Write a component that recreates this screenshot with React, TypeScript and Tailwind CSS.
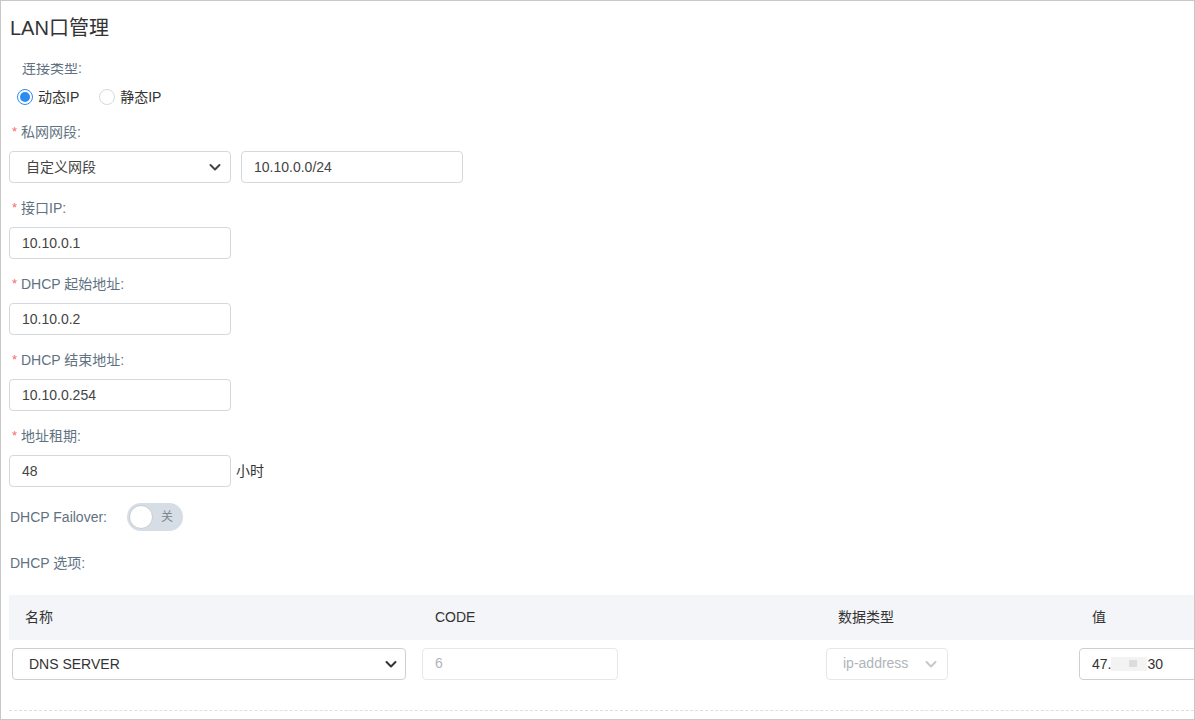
import { ReactNode } from 'react'

const font = { fontFamily: '"Liberation Sans", "Noto Sans CJK SC", sans-serif' }

function Chevron({ className }: { className?: string }) {
  return (
    <svg viewBox="0 0 16 16" className={className} fill="none" stroke="currentColor" strokeWidth="2" strokeLinecap="round" strokeLinejoin="round">
      <path d="M3.5 6l4.5 4.5L12.5 6" />
    </svg>
  )
}

function Label({ children, required = true }: { children: ReactNode; required?: boolean }) {
  return (
    <div className="flex items-center h-[20px] text-[14px] text-[#5f7282] leading-[20px]">
      {required ? <span className="w-[12px] pl-[3px] text-[#f56c6c] text-[13px]">*</span> : <span className="w-[12px]" />}
      <span>{children}</span>
    </div>
  )
}

function TextInput({ value, className = 'w-[222px]' }: { value: string; className?: string }) {
  return (
    <div className={`h-[32px] flex items-center pl-[12px] border border-[#d4d7dc] rounded-[4px] text-[14px] text-[#444] bg-white ${className}`}>
      {value}
    </div>
  )
}

function Field({ label, value, suffix }: { label: string; value: string; suffix?: string }) {
  return (
    <div className="mt-[15px]">
      <Label>{label}</Label>
      <div className="mt-[9px] flex items-center">
        <TextInput value={value} />
        {suffix && <span className="ml-[5px] text-[14px] text-[#333]">{suffix}</span>}
      </div>
    </div>
  )
}

export default function App() {
  return (
    <div style={font} className="w-[1195px] h-[720px] border border-[#c8c8c8] bg-white overflow-hidden">
      <div className="pl-[8px]">
        <h1 className="mt-[13px] ml-[1px] text-[20px] leading-[28px] text-[#333] font-normal">LAN口管理</h1>

        {/* 连接类型 */}
        <div className="mt-[21px] h-[12px] overflow-hidden pl-[13px]">
          <div className="-mt-[5px] leading-[20px] text-[14px] text-[#5f7282]">连接类型:</div>
        </div>
        <div className="mt-[12px] h-[20px] flex items-center pl-[8px] text-[14px] text-[#333]">
          <span className="w-[16px] h-[16px] rounded-full border border-[#2d8cf0] flex items-center justify-center">
            <span className="w-[10px] h-[10px] rounded-full bg-[#2d8cf0]" />
          </span>
          <span className="ml-[5px]">动态IP</span>
          <span className="ml-[20px] w-[16px] h-[16px] rounded-full border border-[#d4d9e0] bg-white" />
          <span className="ml-[5px]">静态IP</span>
        </div>

        {/* 私网网段 */}
        <div className="mt-[15px]">
          <Label>私网网段:</Label>
          <div className="mt-[9px] flex items-center gap-[10px]">
            <div className="w-[222px] h-[32px] flex items-center justify-between pl-[16px] pr-[7px] border border-[#d4d7dc] rounded-[4px] text-[14px] text-[#444]">
              <span>自定义网段</span>
              <Chevron className="w-[16px] h-[16px] text-[#444]" />
            </div>
            <TextInput value="10.10.0.0/24" />
          </div>
        </div>

        <Field label="接口IP:" value="10.10.0.1" />
        <Field label="DHCP 起始地址:" value="10.10.0.2" />
        <Field label="DHCP 结束地址:" value="10.10.0.254" />
        <Field label="地址租期:" value="48" suffix="小时" />

        {/* DHCP Failover */}
        <div className="mt-[16px] h-[28px] flex items-center ml-[1px]">
          <span className="text-[14px] text-[#5f7282]">DHCP Failover:</span>
          <div className="ml-[20px] w-[56px] h-[28px] rounded-full bg-[#d6dde5] flex items-center pl-[2px] pr-[10px] justify-between">
            <span className="w-[24px] h-[24px] rounded-full bg-white border border-[#c4ccd6]" />
            <span className="text-[12px] text-[#7d8690]">关</span>
          </div>
        </div>

        <div className="mt-[22px] h-[20px] leading-[20px] ml-[1px] text-[14px] text-[#5f7282]">DHCP 选项:</div>

        {/* DHCP options table */}
        <div className="mt-[22px] w-[1190px]">
          <div className="grid grid-cols-[410px_403px_254px_1fr] h-[45px] items-center bg-[#f4f5f8] text-[14px] text-[#333]">
            <span className="pl-[16px]">名称</span>
            <span className="pl-[16px]">CODE</span>
            <span className="pl-[16px]">数据类型</span>
            <span className="pl-[16px]">值</span>
          </div>
          <div className="grid grid-cols-[410px_403px_254px_1fr] mt-[8px] h-[32px] items-center text-[14px]">
            <div className="ml-[3px] w-[394px] h-[32px] flex items-center justify-between pl-[16px] pr-[6px] border border-[#ccd0d6] rounded-[4px] text-[#333]">
              <span>DNS SERVER</span>
              <Chevron className="w-[16px] h-[16px] text-[#333]" />
            </div>
            <div className="ml-[3px] -mt-[1px] w-[196px] h-[32px] flex items-center pl-[12px] border border-[#e4e7eb] rounded-[4px] text-[#b0b4ba]">6</div>
            <div className="ml-[4px] -mt-[1px] w-[122px] h-[32px] flex items-center justify-between pl-[16px] pr-[8px] border border-[#e4e7eb] rounded-[4px] text-[#b0b4ba]">
              <span>ip-address</span>
              <Chevron className="w-[16px] h-[16px] text-[#c4c8ce]" />
            </div>
            <div className="ml-[3px] w-[140px] h-[32px] flex items-center pl-[12px] border border-[#ccd0d6] rounded-[4px] text-[#333]">
              <span>47.</span>
              <span className="relative w-[36px] h-[14px] bg-[#f3f3f3]">
                <span className="absolute left-[18px] top-[3px] w-[8px] h-[7px] bg-[#dcdcdc]" />
              </span>
              <span>30</span>
            </div>
          </div>
          <div className="mt-[30px] border-t border-dashed border-[#dcdfe3]" />
        </div>
      </div>
    </div>
  )
}
